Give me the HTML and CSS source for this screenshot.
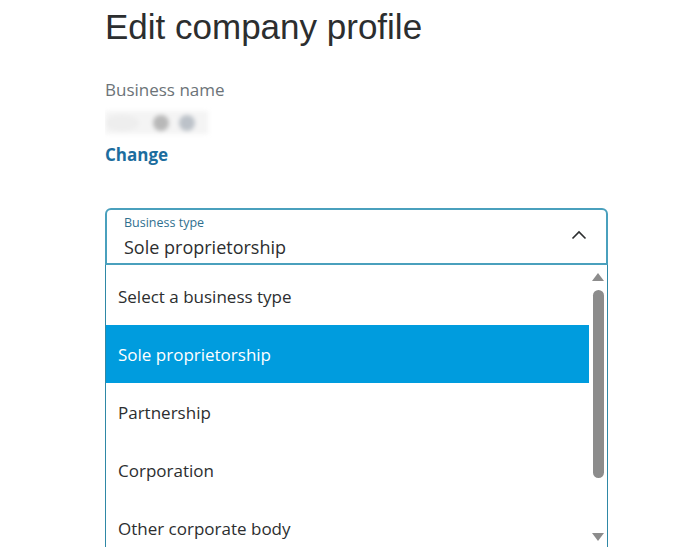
FILE: index.html
```html
<!DOCTYPE html>
<html lang="en">
<head>
<meta charset="utf-8">
<title>Edit company profile</title>
<link rel="stylesheet" href="styles.css">
</head>
<body>
<main class="page">
  <h1 class="title">Edit company profile</h1>
  <div class="field-label">Business name</div>
  <div class="name-blur" aria-hidden="true">
    <span class="blob blob-light"></span>
    <span class="blob blob-dark"></span>
    <span class="blob blob-blue"></span>
  </div>
  <a class="change-link" href="#">Change</a>

  <div class="select">
    <div class="select-text">
      <div class="select-label">Business type</div>
      <div class="select-value">Sole proprietorship</div>
    </div>
    <svg class="chevron" width="16" height="10" viewBox="0 0 16 10"><path d="M1.5 8.5 L8 2 L14.5 8.5" fill="none" stroke="#2c2e2f" stroke-width="1.6"/></svg>
  </div>
  <div class="listbox">
    <ul class="options">
      <li class="option">Select a business type</li>
      <li class="option selected">Sole proprietorship</li>
      <li class="option">Partnership</li>
      <li class="option">Corporation</li>
      <li class="option">Other corporate body</li>
    </ul>
    <div class="scrollbar">
      <svg class="arrow" width="12" height="8" viewBox="0 0 12 8"><polygon points="6,0 12,8 0,8" fill="#8c8c8c"/></svg>
      <div class="track"><div class="thumb"></div></div>
      <svg class="arrow" width="12" height="8" viewBox="0 0 12 8"><polygon points="0,0 12,0 6,8" fill="#8c8c8c"/></svg>
    </div>
  </div>
</main>
</body>
</html>
```

FILE: styles.css
```css
html, body {
  margin: 0;
  padding: 0;
  background: #ffffff;
  overflow: hidden;
}
body {
  font-family: "Open Sans", "Noto Sans", sans-serif;
  color: #2c2e2f;
}
.page {
  width: 503px;
  margin-left: 105px;
  height: 547px;
  overflow: hidden;
}
.title {
  font-family: "Liberation Sans", Arial, sans-serif;
  font-weight: normal;
  font-size: 35px;
  line-height: 40px;
  margin: 7px 0 0 0;
  color: #2c2e2f;
}
.field-label {
  margin-top: 31px;
  font-size: 17px;
  line-height: 24px;
  color: #6c7378;
}
.name-blur {
  display: flex;
  align-items: center;
  gap: 8px;
  width: 103px;
  height: 23px;
  margin-top: 9px;
  background: #f4f4f4;
  filter: blur(2px);
}
.blob {
  display: block;
  width: 16px;
  height: 16px;
  border-radius: 50%;
}
.blob-light { width: 34px; background: #eeeeee; }
.blob-dark { margin-left: 6px; background: #b8b8b8; }
.blob-blue { margin-left: 2px; background: #bcc2c9; }
.change-link {
  display: block;
  margin-top: 9px;
  font-size: 17px;
  line-height: 24px;
  font-weight: bold;
  color: #1c6d9e;
  text-decoration: none;
  width: max-content;
}
.select {
  margin-top: 41px;
  height: 53px;
  border: 2px solid #4aa0bd;
  border-radius: 6px 6px 0 0;
  display: flex;
  align-items: center;
  justify-content: space-between;
  padding: 0 19px 0 17px;
}
.select-text {
  display: flex;
  flex-direction: column;
  padding-top: 1px;
}
.select-label {
  font-size: 12.5px;
  line-height: 16px;
  color: #2f6f8f;
}
.select-value {
  margin-top: 3px;
  font-size: 18px;
  line-height: 26px;
  color: #2c2e2f;
}
.chevron {
  margin-top: -3px;
}
.listbox {
  display: flex;
  border-left: 1px solid #2f88a6;
  border-right: 1px solid #2f88a6;
  height: 320px;
}
.options {
  list-style: none;
  margin: 0;
  padding: 2px 0 0 0;
  flex: 1;
}
.option {
  height: 58px;
  display: flex;
  align-items: center;
  padding-left: 12px;
  font-size: 17px;
  color: #2c2e2f;
}
.option.selected {
  background: #009cde;
  color: #ffffff;
}
.scrollbar {
  width: 18px;
  display: flex;
  flex-direction: column;
  align-items: center;
  padding-top: 8px;
}
.track {
  height: 243px;
  display: flex;
  justify-content: center;
  padding-top: 9px;
}
.thumb {
  width: 11px;
  height: 188px;
  border-radius: 6px;
  background: #8c8c8c;
}
```
